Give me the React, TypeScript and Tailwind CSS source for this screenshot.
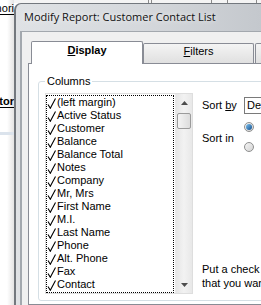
import React from "react";

const columns = [
  "(left margin)",
  "Active Status",
  "Customer",
  "Balance",
  "Balance Total",
  "Notes",
  "Company",
  "Mr, Mrs",
  "First Name",
  "M.I.",
  "Last Name",
  "Phone",
  "Alt. Phone",
  "Fax",
  "Contact",
];

const Check = () => (
  <svg width="9" height="11" viewBox="0 0 9 11" className="mt-[2px] shrink-0">
    <path d="M1 6.5 L3.3 10.3 L8.5 0.5" fill="none" stroke="#000" strokeWidth="1.1" />
  </svg>
);

/** --- lista de colunas com scrollbar --- */
const ColumnList = () => (
  <div className="w-[148px] h-[201px] shrink-0 flex border border-[#dedede] bg-white">
    <div className="w-[129px] h-[198px] mt-px border border-dotted border-black">
      {columns.map((c) => (
        <div key={c} className="h-[13px] flex items-start leading-[13px] whitespace-nowrap">
          <Check />
          <span className="ml-px">{c}</span>
        </div>
      ))}
    </div>
    {/* scrollbar */}
    <div className="w-[17px] h-[199px] ml-px flex flex-col bg-gradient-to-r from-[#e6e6e6] via-[#f2f2f2] to-[#e8e8e8] border-l border-[#eaeaea]">
      <div className="h-[17px] flex items-center justify-center">
        <svg width="7" height="4" viewBox="0 0 7 4">
          <path d="M0 4 L3.5 0 L7 4 Z" fill="#4d4d4d" />
        </svg>
      </div>
      <div className="h-[16px] mx-px mt-[2px] rounded-[2px] border border-[#9b9b9b] bg-gradient-to-r from-[#f4f4f4] to-[#dcdcdc]" />
      <div className="flex-1" />
      <div className="h-[17px] flex items-center justify-center">
        <svg width="7" height="4" viewBox="0 0 7 4">
          <path d="M0 0 L3.5 4 L7 0 Z" fill="#4d4d4d" />
        </svg>
      </div>
    </div>
  </div>
);

const Radio = ({ on }: { on?: boolean }) => (
  <div className="w-[10px] h-[10px] rounded-full border border-[#8e8f8f] bg-gradient-to-br from-[#f4f4f4] to-[#d4d4d4] flex items-center justify-center">
    {on && <div className="w-[6px] h-[6px] rounded-full bg-gradient-to-br from-[#7fc3f0] to-[#0d4f8e]" />}
  </div>
);

export default function App() {
  return (
    <div className="w-[261px] h-[305px] overflow-hidden bg-white flex font-['Liberation_Sans',sans-serif] text-[11px] text-black">
      {/* janela de fundo */}
      <div className="w-[14px] shrink-0 flex flex-col bg-gradient-to-r from-white via-white to-[#e4e4e4]">
        <div className="h-[15px] pt-[2px] border-b border-black flex justify-end overflow-hidden leading-[12px] whitespace-nowrap">
          mori
        </div>
        <div className="h-[80px]" />
        <div className="h-[13px] border-b border-black flex justify-end overflow-hidden leading-[12px] font-bold whitespace-nowrap">
          tor
        </div>
        <div className="h-[24px]" />
        <div className="h-[3px] bg-[#dbe3ec]" />
        <div className="flex-1" />
      </div>

      <div className="flex-1 min-w-0 flex flex-col">
        <div className="h-[3px] shrink-0 flex bg-[#f4f4f4]">
          <div className="w-[135px] border-r border-[#8a8a8a]" />
          <div className="w-[3px] border-r border-[#8a8a8a]" />
          <div className="w-[60px] border-r border-[#8a8a8a]" />
          <div className="w-[16px] border-r border-[#8a8a8a]" />
          <div className="w-[29px] border-r border-[#8a8a8a]" />
        </div>

        {/* dialogo */}
        <div className="flex-1 min-h-0 overflow-hidden flex flex-col rounded-tl-[7px] border-l-2 border-t border-[#73787e] bg-gradient-to-r from-[#dfe2e5] via-[#d5d8dc] to-[#c4c8cd]">
          <div className="h-[27px] shrink-0 pl-[8px] pt-[6px] font-['Open_Sans',sans-serif] text-[11px] leading-[14px] whitespace-nowrap text-[#111] [text-shadow:0_0_6px_#fff]">
            Modify Report: Customer Contact List
          </div>

          <div className="flex-1 min-h-0 ml-[4px] border-l-2 border-t border-[#a3a8ae] bg-[#f0f0f0] flex flex-col">
            {/* abas */}
            <div className="relative z-10 ml-[9px] pt-[9px] flex items-end shrink-0">
              <div className="w-[112px] h-[23px] shrink-0 bg-white border border-b-0 border-[#898c95] rounded-t-[2px] text-center pt-[2px] leading-[13px] font-bold">
                <span className="underline">D</span>isplay
              </div>
              <div className="w-[111px] h-[20px] mb-px shrink-0 border border-b-0 border-[#898c95] rounded-t-[2px] bg-gradient-to-b from-[#f4f4f4] to-[#e0e0e0] text-center pt-[1px] leading-[13px]">
                <span className="underline">F</span>ilters
              </div>
              <div className="w-[80px] h-[20px] mb-px ml-px shrink-0 border border-b-0 border-[#898c95] rounded-t-[2px] bg-gradient-to-b from-[#f4f4f4] to-[#e0e0e0]" />
            </div>

            {/* painel */}
            <div className="-mt-px ml-[6px] w-[400px] flex-1 bg-white border border-[#898c95]">
              <div className="relative ml-[9px] mt-[17px] w-[360px] border border-[#d5dfe5] rounded-[3px] pl-[6px] pt-[11px] pb-[6px] flex">
                <span className="absolute -top-[7px] left-[6px] px-[2px] bg-white leading-[13px]">Columns</span>
                <ColumnList />
                <div className="ml-[9px] flex flex-col pb-[4px]">
                  <div className="mt-[4px] flex items-center">
                    <span className="w-[42px] leading-[13px] whitespace-nowrap">
                      Sort <span className="underline">b</span>y
                    </span>
                    <div className="w-[60px] h-[17px] border border-[#7a7a7a] pl-[2px] leading-[15px]">Default</div>
                  </div>
                  <div className="mt-[8px] flex">
                    <span className="w-[42px] pt-[10px] leading-[13px] whitespace-nowrap">Sort in</span>
                    <div className="flex flex-col gap-[10px]">
                      <Radio on />
                      <Radio />
                    </div>
                  </div>
                  <div className="mt-auto leading-[14px] whitespace-nowrap">
                    <div>Put a check mark next to each column</div>
                    <div>that you want to appear in the report.</div>
                  </div>
                </div>
              </div>
            </div>
          </div>
        </div>
      </div>
    </div>
  );
}
